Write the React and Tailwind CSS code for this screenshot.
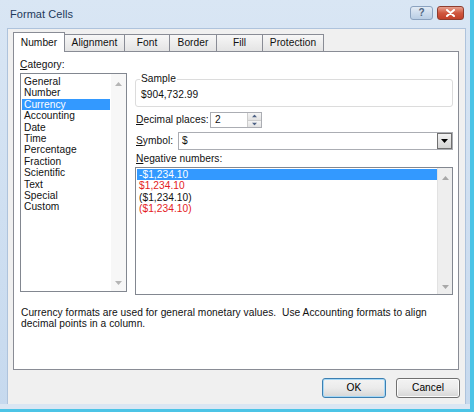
import React from "react";

const categories = [
  "General", "Number", "Currency", "Accounting", "Date", "Time",
  "Percentage", "Fraction", "Scientific", "Text", "Special", "Custom",
];

const negatives = [
  { text: "-$1,234.10", red: false, selected: true },
  { text: "$1,234.10", red: true },
  { text: "($1,234.10)", red: false },
  { text: "($1,234.10)", red: true },
];

const tabs = [
  { name: "Number", w: "w-[52px]" },
  { name: "Alignment", w: "w-[61px]" },
  { name: "Font", w: "w-[46px]" },
  { name: "Border", w: "w-[48px]" },
  { name: "Fill", w: "w-[47px]" },
  { name: "Protection", w: "w-[62px]" },
];

// tiny triangles for scrollbars / spinners
const Tri = ({ down, className }) => (
  <svg width="7" height="4" viewBox="0 0 7 4" className={className}>
    <path d={down ? "M0 0 L7 0 L3.5 4Z" : "M0 4 L3.5 0 L7 4Z"} fill="currentColor" />
  </svg>
);

const Button = ({ children, primary }) => (
  <button
    className={
      "h-[20px] w-[64px] rounded-[3px] border text-[10.2px] text-black bg-linear-to-b from-[#f3f3f3] via-[#ebebeb] to-[#d6d6d6] " +
      (primary ? "border-[#3c7fb1] shadow-[inset_0_0_0_1px_#a6d8f6]" : "border-[#707070] shadow-[inset_0_0_0_1px_#fcfcfc]")
    }
  >
    {children}
  </button>
);

export default function App() {
  return (
    <div className="w-[474px] h-[412px] overflow-hidden bg-[#4cc4e6] font-['Liberation_Sans',Arial,sans-serif] text-[10.2px] tracking-[0.05px] text-[#111]">
      <div className="w-[470px] h-[409px] flex flex-col bg-linear-to-b from-[#d9e6f4] to-[#c6d9ee]">
        {/* title bar */}
        <div className="h-[28px] flex items-center pl-[10px] pr-[6px]">
          <span className="text-[11px] text-[#1e395b]">Format Cells</span>
          <div className="ml-auto flex gap-[4px] -mt-[2px]">
            <div className="w-[23px] h-[14px] rounded-[3px] border border-[#8ba2bf] bg-linear-to-b from-[#e3ebf5] to-[#b9cde4] flex items-center justify-center text-[10px] leading-none text-[#50667f] font-bold">?</div>
            <div className="w-[27px] h-[14px] rounded-[3px] border border-[#8e3d2f] bg-linear-to-b from-[#e7a08f] via-[#d0573f] to-[#c2402a] flex items-center justify-center">
              <svg width="9" height="8" viewBox="0 0 9 8">
                <path d="M1 1 L8 7 M8 1 L1 7" stroke="white" strokeWidth="2" strokeLinecap="round" />
              </svg>
            </div>
          </div>
        </div>

        {/* dialog body */}
        <div className="flex-1 flex pl-[7px] pr-[4px]">
          <div className="flex-1 flex flex-col bg-[#f0f0f0] border-l border-t border-r border-[#aec3dc] pl-[5px] pr-[6px] pt-[3px]">
            {/* tabs */}
            <div className="flex items-end h-[19px]">
              {tabs.map((t, i) =>
                i === 0 ? (
                  <div key={t.name} className={t.w + " h-[20px] -mb-px relative z-10 bg-white border border-b-0 border-[#898c95] flex items-center justify-center"}>
                    {t.name}
                  </div>
                ) : (
                  <div key={t.name} className={t.w + " h-[17px] -ml-px border border-b-0 border-[#898c95] bg-linear-to-b from-[#f7f7f7] to-[#e4e4e4] flex items-center justify-center"}>
                    {t.name}
                  </div>
                )
              )}
            </div>

            {/* panel */}
            <div className="w-[446px] h-[319px] border border-[#898c95] bg-white pl-[6px] pt-[7px] flex flex-col">
              <div className="flex gap-[8px] h-[236px]">
                {/* category column */}
                <div className="flex flex-col w-[107px]">
                  <div className="h-[14px] leading-[12px]"><span className="underline">C</span>ategory:</div>
                  <div className="h-[219px] flex border border-[#828790] bg-white">
                    <div className="flex-1 pl-px pt-[2px] pr-px">
                      {categories.map((c) => (
                        <div key={c} className={"h-[11.4px] leading-[11.4px] pl-[2px] " + (c === "Currency" ? "bg-[#3399ff] text-white" : "")}>
                          {c}
                        </div>
                      ))}
                    </div>
                    <div className="w-[15px] bg-[#f7f7f7] flex flex-col items-center justify-between pt-[8px] pb-[6px] text-[#b5b5b5]">
                      <Tri />
                      <Tri down />
                    </div>
                  </div>
                </div>

                {/* right column */}
                <div className="flex flex-col w-[318px]">
                  <div className="relative mt-[20px] h-[28px] border border-[#dcdcdc] rounded-[3px] pl-[5px] pt-[9px] leading-[12px]">
                    <span className="absolute -top-[7px] left-[4px] bg-white px-[1px] leading-[12px]">Sample</span>
                    $904,732.99
                  </div>

                  <div className="flex items-center mt-[5px] h-[16px]">
                    <span className="w-[75px] pl-px"><span className="underline">D</span>ecimal places:</span>
                    <div className="w-[52px] h-[16px] flex border border-[#abadb3] bg-white">
                      <span className="flex-1 pl-[4px] leading-[14px]">2</span>
                      <div className="w-[14px] flex flex-col border-l border-[#cdcdcd]">
                        <div className="flex-1 flex items-center justify-center bg-linear-to-b from-[#f5f5f5] to-[#e2e2e2] border-b border-[#cdcdcd] text-[#4d6185]"><Tri className="scale-75" /></div>
                        <div className="flex-1 flex items-center justify-center bg-linear-to-b from-[#f5f5f5] to-[#e2e2e2] text-[#4d6185]"><Tri down className="scale-75" /></div>
                      </div>
                    </div>
                  </div>

                  <div className="flex items-center mt-[4px] h-[18px]">
                    <span className="w-[43px] pl-px"><span className="underline">S</span>ymbol:</span>
                    <div className="flex-1 h-[18px] flex border border-[#abadb3] bg-white">
                      <span className="flex-1 pl-[3px] leading-[16px]">$</span>
                      <div className="w-[15px] h-[16px] border border-[#707070] bg-linear-to-b from-[#f2f2f2] to-[#d4d4d4] flex items-center justify-center text-black">
                        <Tri down />
                      </div>
                    </div>
                  </div>

                  <div className="mt-[3px] h-[14px] leading-[12px] pl-px"><span className="underline">N</span>egative numbers:</div>
                  <div className="h-[128px] flex border border-[#828790] bg-white">
                    <div className="flex-1 pl-px pt-px">
                      {negatives.map((n, i) => (
                        <div
                          key={i}
                          className={
                            "h-[11.4px] leading-[11.4px] pl-[2px] " +
                            (n.selected ? "bg-[#3399ff] text-white" : n.red ? "text-[#e41b23]" : "")
                          }
                        >
                          {n.text}
                        </div>
                      ))}
                    </div>
                    <div className="w-[15px] bg-[#eeeeee] border-l border-[#e2e2e2] flex flex-col items-center justify-between pt-[8px] pb-[5px] text-[#a8a8a8]">
                      <Tri />
                      <Tri down />
                    </div>
                  </div>
                </div>
              </div>

              <p className="mt-[12px] pl-px leading-[11.4px]">
                Currency formats are used for general monetary values.{"\u00a0"} Use Accounting formats to align
                <br />
                decimal points in a column.
              </p>
            </div>

            {/* buttons */}
            <div className="flex justify-end gap-[10px] mt-[8px] -mr-px">
              <Button primary>OK</Button>
              <Button>Cancel</Button>
            </div>
          </div>
        </div>
        <div className="h-[5px] bg-[#dae6f3]" />
      </div>
    </div>
  );
}
